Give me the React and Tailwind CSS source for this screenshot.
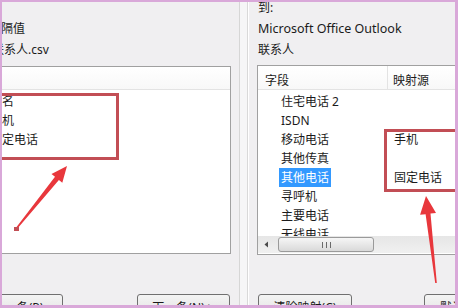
export default function App() {
  const rightRows = [
    { a: "住宅电话 2", b: "" },
    { a: "ISDN", b: "" },
    { a: "移动电话", b: "手机" },
    { a: "其他传真", b: "" },
    { a: "其他电话", b: "固定电话", sel: true },
    { a: "寻呼机", b: "" },
    { a: "主要电话", b: "" },
    { a: "无线电话", b: "" },
  ];
  const leftRows = ["姓名", "手机", "固定电话"];
  const btn =
    "h-[28px] shrink-0 flex items-center justify-center rounded-[3px] border border-[#707070] bg-gradient-to-b from-[#f4f4f4] via-[#e9e9e9] to-[#d6d6d6] leading-[16px]";

  return (
    <div className="relative w-[458px] h-[308px] overflow-hidden bg-[#f0eff1] border-t-2 border-l-2 border-r-[3px] border-b-[3px] border-[#d9a8d9] text-[12px] text-[#1b1b1b] font-['Noto_Sans','Noto_Sans_CJK_SC',sans-serif]">
      <div className="flex h-full">
        {/* Left column */}
        <div className="w-[236px] shrink-0 flex flex-col overflow-hidden">
          <div className="mt-[-5px] flex flex-col">
            <div className="h-[21px] leading-[21px] ml-[-40px] whitespace-nowrap">从:</div>
            <div className="h-[21px] leading-[21px] ml-[-37px] whitespace-nowrap">逗号分隔值</div>
            <div className="h-[21px] leading-[21px] ml-[-10px] whitespace-nowrap">联系人.csv</div>
          </div>
          <div className="mt-[6px] ml-[-30px] w-[259px] h-[188px] shrink-0 border border-[#a0a0a0] bg-white flex flex-col">
            <div className="h-[23px] shrink-0 border-b border-[#e3e3e3] bg-gradient-to-b from-white to-[#f8f8f8]" />
            <div className="pt-[2px] flex flex-col">
              {leftRows.map((r) => (
                <div key={r} className="h-[19px] leading-[19px] pl-[17px] whitespace-nowrap">
                  {r}
                </div>
              ))}
            </div>
          </div>
          <div className="mt-[40px] flex">
            <div className={btn + " ml-[-29px] w-[90px]"}>上一条(P)</div>
            <div className={btn + " ml-auto mr-[8px] w-[93px]"}>下一条(N) &gt;</div>
          </div>
        </div>

        {/* Separator */}
        <div className="w-[12px] shrink-0 flex">
          <div className="ml-[1px] w-px bg-[#d6d6d6]" />
          <div className="w-[7px] bg-[#f6f6f7]" />
          <div className="w-px bg-[#d9d9d9]" />
          <div className="w-px bg-white" />
        </div>

        {/* Right column */}
        <div className="flex-1 flex flex-col overflow-hidden">
          <div className="mt-[-5px] pl-[8px] flex flex-col">
            <div className="h-[21px] leading-[21px] whitespace-nowrap">到:</div>
            <div className="h-[21px] leading-[21px] whitespace-nowrap text-[12.5px]">Microsoft Office Outlook</div>
            <div className="h-[21px] leading-[21px] whitespace-nowrap">联系人</div>
          </div>
          <div className="mt-[5px] ml-[7px] w-[260px] h-[190px] shrink-0 border border-[#a0a0a0] bg-white flex flex-col">
            <div className="h-[24px] shrink-0 flex border-b border-[#e3e3e3] bg-gradient-to-b from-white to-[#f8f8f8]">
              <div className="w-[130px] shrink-0 border-r border-[#e3e3e3] pl-[7px] pt-[5px] leading-[19px]">字段</div>
              <div className="pl-[5px] pt-[5px] leading-[19px] whitespace-nowrap">映射源</div>
            </div>
            <div className="h-[146px] shrink-0 overflow-hidden pt-[2px] flex flex-col">
              {rightRows.map((r) => (
                <div key={r.a} className="h-[19px] shrink-0 flex leading-[19px]">
                  <div className="w-[130px] shrink-0 pl-[21px] flex">
                    <span className={r.sel ? "px-[2px] bg-[#3399ff] text-white" : "px-[2px]"}>{r.a}</span>
                  </div>
                  <div className="pl-[6px] whitespace-nowrap">{r.b}</div>
                </div>
              ))}
            </div>
            <div className="h-[17px] shrink-0 flex bg-gradient-to-b from-[#e6e6e6] to-[#f0f0f0]">
              <div className="w-[17px] shrink-0 flex items-center justify-center">
                <svg width="5" height="7" viewBox="0 0 5 7">
                  <path d="M4 0.5 L0.5 3.5 L4 6.5 Z" fill="#4a4a4a" />
                </svg>
              </div>
              <div className="ml-[3px] my-[1px] w-[96px] shrink-0 rounded-[3px] border border-[#9a9a9a] bg-gradient-to-b from-[#f6f6f6] to-[#d9d9d9] flex items-center justify-center gap-[3px]">
                <div className="w-px h-[6px] bg-[#6a6a6a]" />
                <div className="w-px h-[6px] bg-[#6a6a6a]" />
                <div className="w-px h-[6px] bg-[#6a6a6a]" />
              </div>
            </div>
          </div>
          <div className="mt-[39px] flex">
            <div className={btn + " ml-[8px] w-[94px]"}>清除映射(C)</div>
            <div className={btn + " ml-[72px] w-[94px]"}>默认映射(T)</div>
          </div>
        </div>
      </div>

      {/* Annotations */}
      <div className="absolute left-[-12px] top-[91px] w-[129px] h-[67px] border-[3px] border-[#c24e55]" />
      <div className="absolute left-[382px] top-[127px] w-[100px] h-[63px] border-[3px] border-[#c24e55]" />
      <svg className="absolute left-[-2px] top-[-2px] pointer-events-none" width="458" height="308" viewBox="0 0 458 308">
        <polygon
          points="67,166 62.3,182.8 58.9,180 16.6,229.5 15.4,228.5 55,176.8 51.5,174"
          fill="#e8373c"
        />
        <rect x="14" y="227" width="5" height="4" fill="#c24e55" />
        <polygon
          points="426,196 436,213 430.5,213.6 436.8,282.9 435.2,283.1 425.6,214.2 420.1,214.8"
          fill="#e8373c"
        />
      </svg>
    </div>
  );
}
